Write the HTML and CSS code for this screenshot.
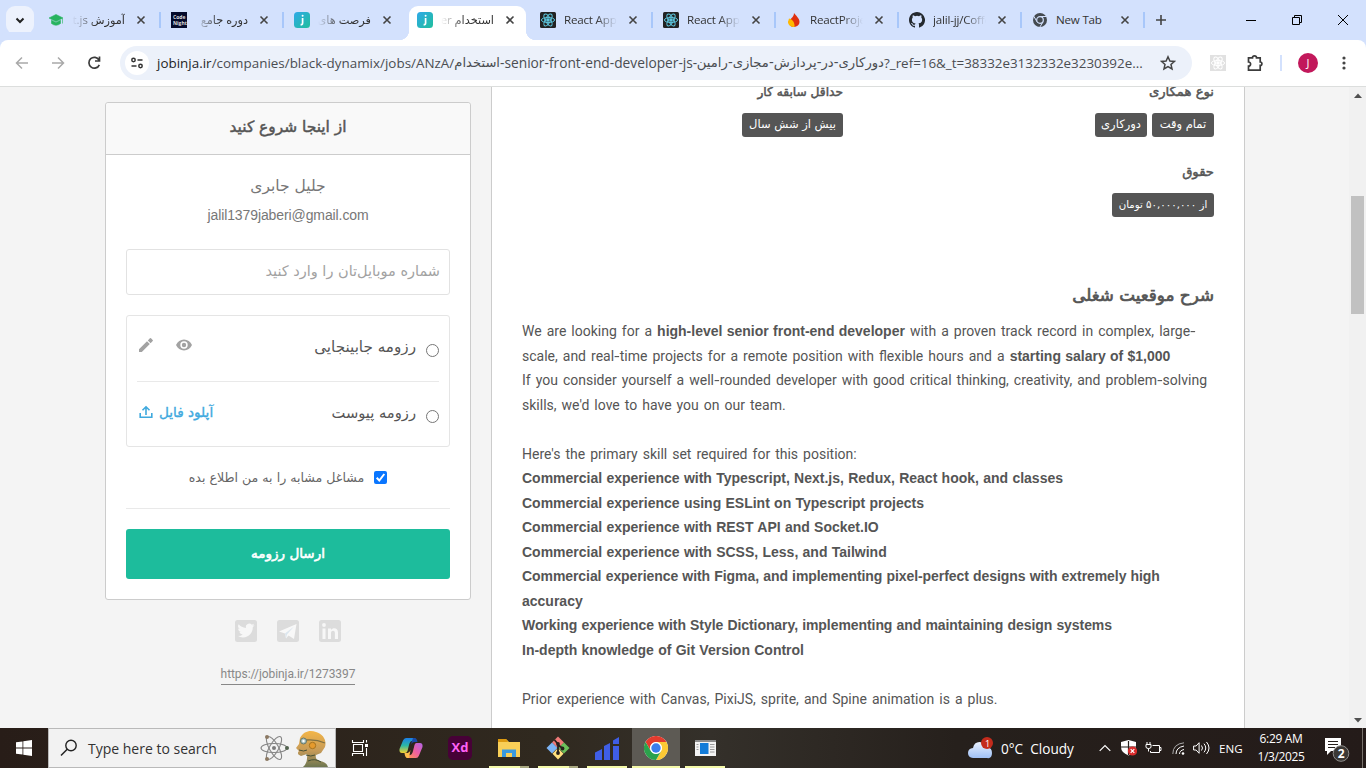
FILE: index.html
```html
<!DOCTYPE html>
<html lang="fa">
<head>
<meta charset="utf-8">
<title>jobinja.ir</title>
<link rel="stylesheet" href="styles.css">
</head>
<body>
<svg class="defs" width="0" height="0">
  <defs>
    <linearGradient id="teal" x1="0" y1="0" x2="1" y2="1"><stop offset="0" stop-color="#2fa9e8"/><stop offset="1" stop-color="#1fbf9c"/></linearGradient>
    <linearGradient id="cop" x1="0" y1="0" x2="0" y2="1"><stop offset="0" stop-color="#1b7fe8"/><stop offset=".5" stop-color="#2cb7a5"/><stop offset="1" stop-color="#f3d12f"/></linearGradient>
    <linearGradient id="cop2" x1="1" y1="0" x2="0" y2="1"><stop offset="0" stop-color="#b264e8"/><stop offset=".5" stop-color="#ee5fa0"/><stop offset="1" stop-color="#ff9a4a"/></linearGradient>
    <linearGradient id="cloud" x1="0" y1="0" x2="0" y2="1"><stop offset="0" stop-color="#e9f1ff"/><stop offset="1" stop-color="#9fc0f5"/></linearGradient>
    <linearGradient id="gold" x1="0" y1="0" x2="0" y2="1"><stop offset="0" stop-color="#f3b548"/><stop offset=".55" stop-color="#c59a58"/><stop offset="1" stop-color="#6d7650"/></linearGradient>
    <g id="x"><path d="M-3.5-3.5 3.5 3.5M3.5-3.5-3.5 3.5" stroke="#444" stroke-width="1.6" fill="none"/></g>
    <g id="atom"><g fill="none" stroke-width="1"><ellipse rx="6.6" ry="2.6"/><ellipse rx="6.6" ry="2.6" transform="rotate(60)"/><ellipse rx="6.6" ry="2.6" transform="rotate(120)"/></g><circle r="1.3"/></g>
    <g id="jfav"><rect width="16" height="16" rx="3.5" fill="url(#teal)"/><path d="M8.6 6v5q0 1.8-2 1.6" stroke="#fff" stroke-width="1.7" fill="none"/><circle cx="8.6" cy="3.7" r="1" fill="#fff"/></g>
    <g id="rfav"><rect width="16" height="16" rx="1.5" fill="#222"/><use href="#atom" transform="translate(8 8)" stroke="#5cc4dc" fill="#5cc4dc"/></g>
  </defs>
</svg>

<header class="tabstrip">
  <div class="tabsearch"><svg width="28" height="28"><path d="M10.5 12.5 14 16l3.500-3.500" stroke="#222" stroke-width="2" fill="none"/></svg></div>
  <div class="tab sep"><svg class="fav" width="16" height="16"><path d="M8 2.500 15 6 8 9.500 1 6zM3.500 8.200v3.300Q8 15 12.500 11.500V8.200L8 10.500zM14.500 6.500v5" fill="#27b35f" stroke="#27b35f" stroke-width=".6"/></svg><span class="title rtl">آموزش Next.js</span><svg class="close" width="10" height="10"><use href="#x" x="5" y="5"/></svg></div>
  <div class="tab sep"><svg class="fav" width="16" height="16"><rect width="16" height="16" fill="#050b2c"/><text x="2" y="7" class="tiny">Code</text><text x="2" y="13" class="tiny">Night</text></svg><span class="title rtl">دوره جامع</span><svg class="close" width="10" height="10"><use href="#x" x="5" y="5"/></svg></div>
  <div class="tab"><svg class="fav" width="16" height="16"><use href="#jfav"/></svg><span class="title rtl">فرصت های شغلی</span><svg class="close" width="10" height="10"><use href="#x" x="5" y="5"/></svg></div>
  <div class="tab active"><svg class="fav" width="16" height="16"><use href="#jfav"/></svg><span class="title rtl">استخدام developer</span><svg class="close" width="10" height="10"><use href="#x" x="5" y="5"/></svg></div>
  <div class="tab sep"><svg class="fav" width="16" height="16"><use href="#rfav"/></svg><span class="title">React App</span><svg class="close" width="10" height="10"><use href="#x" x="5" y="5"/></svg></div>
  <div class="tab sep"><svg class="fav" width="16" height="16"><use href="#rfav"/></svg><span class="title">React App</span><svg class="close" width="10" height="10"><use href="#x" x="5" y="5"/></svg></div>
  <div class="tab sep"><svg class="fav" width="16" height="16"><path d="M8 1C10 4 13.500 6 13.500 10A5.500 5 0 0 1 8 15C5 15 3 13 2.500 10 3 7 8 6 8 1" fill="#e0300f"/><path d="M3 6.500C5 7 9 9 8.500 15 5 15 2 13 2 10z" fill="#ffb900"/></svg><span class="title">ReactProject</span><svg class="close" width="10" height="10"><use href="#x" x="5" y="5"/></svg></div>
  <div class="tab sep"><svg class="fav" width="16" height="16" viewBox="0 0 16 16"><path fill="#24292f" d="M8 0C3.580 0 0 3.580 0 8c0 3.540 2.290 6.530 5.470 7.590.4.070.55-.17.55-.38 0-.19-.01-.82-.01-1.490-2.010.37-2.530-.49-2.690-.94-.09-.23-.48-.94-.82-1.130-.28-.15-.68-.52-.01-.53.63-.01 1.080.58 1.230.82.72 1.210 1.870.87 2.330.66.070-.52.28-.87.51-1.070-1.780-.2-3.640-.89-3.640-3.950 0-.87.31-1.590.82-2.150-.08-.2-.36-1.020.080-2.120 0 0 .67-.21 2.200.82a7.600 7.600 0 0 1 4 0c1.530-1.040 2.200-.82 2.200-.82.44 1.100.16 1.920.08 2.120.51.56.82 1.270.82 2.150 0 3.070-1.870 3.750-3.650 3.950.29.25.54.73.54 1.480 0 1.070-.01 1.930-.01 2.200 0 .21.15.46.55.38A8 8 0 0 0 8 0"/></svg><span class="title">jalil-jj/Coffee</span><svg class="close" width="10" height="10"><use href="#x" x="5" y="5"/></svg></div>
  <div class="tab sep"><svg class="fav" width="16" height="16"><circle cx="8" cy="8" r="7" fill="#444a50"/><path d="M8 4.500H14.500M5 9.800 1.800 4.200M11 9.800 7.800 15.200" stroke="#d3e1fd" stroke-width="1"/><circle cx="8" cy="8" r="3.300" fill="#444a50" stroke="#d3e1fd" stroke-width="1.200"/></svg><span class="title nt">New Tab</span><svg class="close" width="10" height="10"><use href="#x" x="5" y="5"/></svg></div>
  <svg class="plus" width="12" height="12"><path d="M6 1v10M1 6h10" stroke="#444" stroke-width="1.600"/></svg>
  <div class="winctl">
    <svg width="46" height="40"><path d="M18 20.500h10" stroke="#000"/></svg>
    <svg width="46" height="40"><path d="M18.500 17.500h7v7h-7zM20.500 17.500v-2h7v7h-2" fill="none" stroke="#000"/></svg>
    <svg width="46" height="40"><path d="m18 15 10 10M28 15 18 25" stroke="#000"/></svg>
  </div>
</header>

<nav class="toolbar">
  <svg class="nb" width="36" height="46"><path d="M16.500 23h11.500M22 17.500 16.500 23l5.500 5.500" fill="none" stroke="#a9a9a9" stroke-width="1.500"/></svg>
  <svg class="nb" width="36" height="46"><path d="M16 23h11.500M22 17.500l5.500 5.500-5.500 5.500" fill="none" stroke="#a9a9a9" stroke-width="1.500"/></svg>
  <svg class="nb" width="36" height="46"><path d="M27 20a5.400 5.400 0 1 0 .3 4.800M27.500 16.500v4.500h-4.500" fill="none" stroke="#3c3c3c" stroke-width="1.700"/></svg>
  <div class="omni">
    <svg class="site" width="24" height="24"><circle cx="12" cy="12" r="12" fill="#fff"/><g fill="none" stroke="#333" stroke-width="1.500"><circle cx="8.500" cy="9" r="1.700"/><path d="M12.500 9h5M6.500 15h5"/><circle cx="15.500" cy="15" r="1.700"/></g></svg>
    <div class="url"><span class="u1"><b>jobinja.ir</b>/companies/black-dynamix/jobs/ANzA/</span><span class="u2 fa">استخدام</span><span class="u3">-senior-front-end-developer-js-</span><span class="u4 fa">دورکاری-در-پردازش-مجازی-رامین</span><span class="u5">?_ref=16&amp;_t=38332e3132332e3230392e...</span></div>
    <svg class="star" width="16" height="16"><path d="m8 1.800 1.900 4.200 4.500.4-3.400 3 1 4.500L8 11.500 4 13.900l1-4.500-3.400-3 4.500-.4z" fill="none" stroke="#444" stroke-width="1.500"/></svg>
  </div>
  <svg class="ext" width="16" height="16"><rect width="16" height="16" fill="#e1e1e1"/><use href="#atom" transform="translate(8 8)" stroke="#fff" fill="#fff"/></svg>
  <svg class="puz" width="18" height="18"><path d="M2.500 3.800h4a1.500 1.500 0 0 1 4 0h3.700v4.200a1.600 1.600 0 0 1 0 3.400v4.800H2.500v-4a2 2 0 0 0 0-4.200z" fill="none" stroke="#3c3c3c" stroke-width="1.700"/></svg>
  <i class="vsep"></i>
  <span class="avatar">J</span>
  <svg class="dots" width="6" height="20"><g fill="#444"><circle cx="3" cy="5" r="1.600"/><circle cx="3" cy="10" r="1.600"/><circle cx="3" cy="15" r="1.600"/></g></svg>
</nav>

<main class="page">
  <aside class="side">
    <section class="card">
      <h2 class="cardhead fa">از اینجا شروع کنید</h2>
      <div class="cardbody">
        <p class="name fa">جلیل جابری</p>
        <p class="mail">jalil1379jaberi@gmail.com</p>
        <div class="input fa">شماره موبایل‌تان را وارد کنید</div>
        <div class="choices">
          <div class="choice">
            <i class="radio"></i><span class="ctext fa">رزومه جابینجایی</span>
            <span class="acts"><svg width="16" height="12"><path d="M8 .5C4.500.5 1.500 2.600 0 6c1.500 3.400 4.500 5.500 8 5.500s6.500-2.100 8-5.500C14.500 2.600 11.500.5 8 .5" fill="#a2a2a2"/><circle cx="8" cy="6" r="3.700" fill="#fff"/><circle cx="8" cy="6" r="2.200" fill="#a2a2a2"/></svg><svg width="14" height="14"><path d="M0 11.200V14h2.800L10.800 6 8 3.200zM8.800 2.400l2.800 2.800L13.700 3.100a.8.800 0 0 0 0-1.100L12 .3a.8.800 0 0 0-1.100 0z" fill="#a2a2a2"/></svg></span>
          </div>
          <div class="choice second">
            <i class="radio"></i><span class="ctext att fa">رزومه پیوست</span>
            <span class="upload"><span class="fa">آپلود فایل</span><svg width="14" height="14"><path d="M1.200 8v4.300h11.600V8M7 10V2M3.500 5.300 7 1.800l3.500 3.500" fill="none" stroke="#3fa9de" stroke-width="1.600"/></svg></span>
          </div>
        </div>
        <div class="notify"><svg width="13" height="13"><rect width="13" height="13" rx="2" fill="#0a76ff"/><path d="m2.700 6.800 2.600 2.700 5-6.500" fill="none" stroke="#fff" stroke-width="2"/></svg><span class="fa">مشاغل مشابه را به من اطلاع بده</span></div>
        <div class="send fa">ارسال رزومه</div>
      </div>
    </section>
    <div class="social">
      <svg width="22" height="22"><rect width="22" height="22" rx="2.500" fill="#dcdcdc"/><path transform="translate(2.500 2) scale(.71)" fill="#f7f7f7" d="M23.950 4.570a10 10 0 0 1-2.820.77 4.960 4.960 0 0 0 2.160-2.720c-.95.55-2 .96-3.130 1.180a4.920 4.920 0 0 0-8.380 4.480C7.690 8.100 4.070 6.130 1.640 3.160a4.920 4.920 0 0 0 1.520 6.570 4.900 4.900 0 0 1-2.230-.61v.06a4.920 4.920 0 0 0 3.950 4.830 5 5 0 0 1-2.210.08 4.940 4.940 0 0 0 4.600 3.420A9.870 9.870 0 0 1 0 19.540a14 14 0 0 0 7.550 2.210c9.050 0 14-7.500 14-13.980 0-.21 0-.42-.02-.63a9.940 9.940 0 0 0 2.460-2.550z"/></svg>
      <svg width="22" height="22"><rect width="22" height="22" rx="2.500" fill="#dcdcdc"/><path d="M2 11.500 19.500 4 17 19l-5.500-3.500L9 18.500l-1-5z" fill="#f8f8f8"/><path d="m8 13.500 9-7-7 8-1 4z" fill="#dce6ee"/></svg>
      <svg width="22" height="22"><rect width="22" height="22" rx="2.500" fill="#dcdcdc"/><path d="M3.500 8.500h3V19h-3zM9 8.500h3v1.600c2-3 7-2.300 7 2.400V19h-3.100v-6c0-3.300-3.900-3-3.900 0v6H9z" fill="#f7f7f7"/><circle cx="5" cy="5" r="1.900" fill="#f7f7f7"/></svg>
    </div>
    <span class="short">https://jobinja.ir/1273397</span>
  </aside>

  <article class="job">
    <div class="facts" dir="rtl">
      <div class="fact"><h4 class="fa">نوع همکاری</h4><div class="tags"><span class="tag t1 fa">تمام وقت</span><span class="tag t2 fa">دورکاری</span></div></div>
      <div class="fact wide"><h4 class="fa">حداقل سابقه کار</h4><div class="tags"><span class="tag t3 fa">بیش از شش سال</span></div></div>
      <div class="fact"><h4 class="fa">حقوق</h4><div class="tags"><span class="tag t4 fa">از ۵۰,۰۰۰,۰۰۰ تومان</span></div></div>
    </div>
    <h3 class="jobtitle fa" dir="rtl">شرح موقعیت شغلی</h3>
    <div class="desc">We are looking for a <b>high-level senior front-end developer</b> with a proven track record in complex, large<span class="hy">-</span><br>scale, and real<span class="hy">-</span>time projects for a remote position with flexible hours and a <b>starting salary of $1,000</b><br>If you consider yourself a well<span class="hy">-</span>rounded developer with good critical thinking, creativity, and problem<span class="hy">-</span>solving<br>skills, we'd love to have you on our team.<br><br>Here's the primary skill set required for this position:<br><b>Commercial experience with Typescript, Next.js, Redux, React hook, and classes<br>Commercial experience using ESLint on Typescript projects<br>Commercial experience with REST API and Socket.IO<br>Commercial experience with SCSS, Less, and Tailwind<br><span class="snug">Commercial experience with Figma, and implementing pixel-perfect designs with extremely high</span><br>accuracy<br><span class="snug">Working experience with Style Dictionary, implementing and maintaining design systems</span><br>In-depth knowledge of Git Version Control</b><br><br>Prior experience with Canvas, PixiJS, sprite, and Spine animation is a plus.</div>
  </article>

  <div class="scroll">
    <svg width="17" height="17"><path d="M5 11h8L9 6.500z" fill="#505050"/></svg>
    <i class="thumb"></i>
    <svg width="17" height="17"><path d="M5 7h8l-4 4.500z" fill="#505050"/></svg>
  </div>
</main>

<footer class="taskbar">
  <div class="slot"><svg width="16" height="16"><path d="M0 2.300 6.500 1.400v6.200H0zM7.300 1.300 16 0v7.600H7.300zM0 8.400h6.500v6.200L0 13.700zM7.300 8.400H16V16l-8.700-1.300z" fill="#fff"/></svg></div>
  <div class="search">
    <svg width="18" height="18"><circle cx="11" cy="6.500" r="5.200" fill="none" stroke="#222" stroke-width="1.400"/><path d="M7.200 10.300 1 16.500" stroke="#222" stroke-width="1.500"/></svg>
    <span>Type here to search</span>
    <svg class="art" width="74" height="38">
      <g transform="translate(14 19)" fill="none" stroke="#858585" stroke-width="1.100"><ellipse rx="13" ry="4.500"/><ellipse rx="13" ry="4.500" transform="rotate(60)"/><ellipse rx="13" ry="4.500" transform="rotate(120)"/><circle r="1.500" fill="#777"/></g>
      <circle cx="7" cy="8" r="2" fill="#8c7963"/><circle cx="27" cy="19" r="2" fill="#52634f"/><circle cx="7" cy="30" r="2" fill="#8c7963"/>
      <path d="M40 9C44 2 50 1 56 3c7 2 11 8 9 15l-4 6-5 2c-1 4 1 5 4 6 5 1 7 3 8 6H43q5-4 4-13l-6 2c-3-1-4-3-2-5l-3-3 3-4z" fill="url(#gold)"/>
      <path d="M46 11q10-1 19 3" stroke="#7f7043" fill="none" stroke-width="1.300"/><circle cx="43.500" cy="12" r="3" fill="#a8c2c2" stroke="#667566"/><circle cx="43.500" cy="12" r="1.200" fill="#fff"/><circle cx="52.500" cy="16.500" r="3.200" fill="#e59a2d" stroke="#a7741f"/><path d="M39 21q5 2 8 0M46 26q5 2 9 0M48 32q7-3 13 1" stroke="#434f35" fill="none"/>
    </svg>
  </div>
  <div class="slot"><svg width="18" height="16"><path d="M2.500 4.500h9v7h-9zM1.500 0v2.500h11V0M1.500 16v-2.500h11V16M15.500 0v2.500M15.500 8v8" fill="none" stroke="#fff" stroke-width="1.100"/><path d="M14 4h3v3h-3z" fill="#fff"/></svg></div>
  <div class="apps">
    <div class="app"><svg width="24" height="22"><path d="M7 1h8q2 0 1.500 2L13 4q-2 0-3 4l-1.500 6q-.6 2-2.500 2H3q-3 0-2.500-4L4 3.500Q5 1 7 1" fill="url(#cop)"/><path d="M17.500 6H21q3 0 2.500 4L20 18.500Q19 21 17 21H9q-2 0-1.500-2l3.500-1q2 0 3-4l1.500-6q.5-2 2-2" fill="url(#cop2)"/><path d="M14 1h2q2 .5 2.500 4h-3q-3 0-4 4l1.500-5z" fill="#1949a8"/><path d="M10 21H8q-2-.5-2.500-5h3q2 0 3-3z" fill="#ffbd4c"/></svg></div>
    <div class="app"><span class="xd">Xd</span></div>
    <div class="app run split"><svg width="22" height="18"><path d="M0 1h9l2 2h11v15H0z" fill="#f9cf57"/><path d="M0 0h8.500l1.500 3H0z" fill="#dd9a10"/><path d="M4 18v-7.500h14V18h-4v-4H8v4z" fill="#3a9ade"/></svg></div>
    <div class="app run split"><svg width="24" height="24"><path d="m12 .5 6 6-6 6-6-6z" fill="#f07a78"/><path d="m6 6.500 5.500 5.500L6 17.500.5 12z" fill="#7db4f5"/><path d="m18 6.500 5.500 5.500-5.500 5.500-5.500-5.500z" fill="#6cc05b"/><path d="m12 12 5.500 5.700L12 23.500l-5.500-5.800z" fill="#ffe07e"/><path d="M8.500 4 12 8v9M12 9l5 3.500" fill="none" stroke="#26201c" stroke-width="1.800"/><circle cx="12" cy="8" r="1.900" fill="#26201c"/><circle cx="16.500" cy="12.500" r="1.900" fill="#26201c"/><circle cx="12" cy="17" r="1.900" fill="#26201c"/></svg></div>
    <div class="app run"><svg width="25" height="23"><path d="M0 15.500 7 12v11H0zM9 9 15 6v17H9zM18 3.500 24 0v7h-6zM18 9h6v14h-6z" fill="#3f5ee6"/></svg></div>
    <div class="app run on"><svg width="24" height="24" viewBox="0 0 24 24"><circle cx="12" cy="12" r="12" fill="#fff"/><path d="M1.600 6A12 12 0 0 1 22.400 6H12a6 6 0 0 0-5.200 9z" fill="#e33b2e"/><path d="M22.400 6A12 12 0 0 1 12 24l5.200-9A6 6 0 0 0 12 6z" fill="#fcc934"/><path d="M12 24A12 12 0 0 1 1.600 6l5.200 9a6 6 0 0 0 10.400 0z" fill="#2ba24c"/><circle cx="12" cy="12" r="5.800" fill="#fff"/><circle cx="12" cy="12" r="4.700" fill="#3b7ded"/></svg></div>
    <div class="app run"><svg width="21" height="16"><rect width="21" height="16" fill="#f3f3f3"/><path d="M0 0h21v2H0z" fill="#8c8c8c"/><path d="M5 3h8.500v11H5z" fill="#127bd8"/><path d="M1.500 4.500h2M1.500 7h2M1.500 9.500h2M15 4.500h4.500M15 7h4.500M15 9.500h4.500M15 12h4.500" stroke="#9a9a9a"/></svg></div>
  </div>
  <div class="tray">
    <svg class="cloud" width="26" height="22"><path d="M5 21q-5-.5-5-5t5-5q1-6 6.500-6T18 11q6-1 6 5t-5 5z" fill="url(#cloud)"/><circle cx="19" cy="6" r="6" fill="#c42b1c"/><text x="17" y="9.500" class="badge">1</text></svg>
    <span class="weather">0°C&nbsp; Cloudy</span>
    <svg class="chev" width="12" height="8"><path d="m.7 6.800 5.300-5.300 5.300 5.300" fill="none" stroke="#fff" stroke-width="1.200"/></svg>
    <svg class="shield" width="16" height="16"><path d="M7.500 0 15 2v5q0 5.500-7.500 8.500Q0 12.500 0 7V2z" fill="#fff"/><path d="M7.500 1v14M0 7h15" stroke="#26201c" stroke-width="1.200"/><circle cx="11.500" cy="11" r="4.600" fill="#d92c2c"/><path d="m9.700 9.200 3.600 3.600M13.300 9.200 9.700 12.800" stroke="#fff" stroke-width="1.200"/></svg>
    <svg class="bat" width="17" height="14"><path d="M7.500 4.500h7v7H5.500v-1.500M14.500 6.500h1.500v3h-1.500M1 3.500h5v2.500q0 1.500-2.500 1.500T1 6zM2 1v2.500M5 1v2.500M3.500 7.500v3" fill="none" stroke="#fff"/></svg>
    <svg class="wifi" width="13" height="13"><g fill="none" stroke="#fff"><path d="M7.500 12q0-3.500 4.500-4.500M4 12q0-6.500 8-8" /><path d="M.8 12Q.8 2 12 .8" stroke="#aaa"/></g><circle cx="11" cy="11.500" r="1.300" fill="#fff"/></svg>
    <svg class="vol" width="17" height="14"><path d="M.6 5h2.500l3-3.300v10.600L3.100 9H.6zM8.500 4.500q2 2.500 0 5M11 2.700q3.500 4.300 0 8.600M13.500 1q5 6 0 12" fill="none" stroke="#fff"/></svg>
    <span class="eng">ENG</span>
    <div class="clock"><span>6:29 AM</span><span>1/3/2025</span></div>
    <svg class="note" width="26" height="25"><path d="M1 0h16v13H7l-4 4v-4H1z" fill="#fff"/><path d="M4 3.500h10M4 6.500h10M4 9.500h7" stroke="#26201c" stroke-width="1.200"/><circle cx="17" cy="15.500" r="7.800" fill="#3b3835" stroke="#8f8d8b"/><text x="13.700" y="20" class="two">2</text></svg>
    <i class="edge"></i>
  </div>
</footer>
</body>
</html>
```
FILE: styles.css
```css
* { box-sizing: border-box; }
body { margin: 0; width: 1366px; height: 768px; overflow: hidden; display: flex; flex-direction: column; font-family: "Open Sans", "DejaVu Sans", sans-serif; background: #f4f4f4; color: #555; }
svg { display: block; flex: none; }
i { display: block; }
.defs { position: absolute; }
.fa { font-family: "DejaVu Sans", sans-serif; direction: rtl; white-space: nowrap; }

.tabstrip { height: 40px; flex: none; display: flex; align-items: center; background: #d3e1fd; padding-left: 6px; }
.tabsearch { width: 28px; height: 28px; border-radius: 9px; background: #edf2fd; margin-right: 3px; }
.tab { width: 123px; height: 28px; flex: none; display: flex; align-items: center; padding-left: 11px; position: relative; }
.tab .title { width: 53px; height: 20px; margin-left: 8px; margin-right: 1px; line-height: 20px; font-size: 11.6px; letter-spacing: -.2px; color: #333; overflow: hidden; white-space: nowrap; -webkit-mask-image: linear-gradient(90deg, #000 60%, transparent); mask-image: linear-gradient(90deg, #000 60%, transparent); }
.tab .title.rtl { direction: rtl; font-family: "Open Sans", "DejaVu Sans", sans-serif; letter-spacing: 0; font-size: 11.3px; -webkit-mask-image: linear-gradient(270deg, #000 55%, transparent); mask-image: linear-gradient(270deg, #000 55%, transparent); }
.tab .title.nt { -webkit-mask-image: none; mask-image: none; }
.tab .close { margin-left: 10px; }
.tab.sep::after { content: ""; position: absolute; right: -1px; top: 6px; width: 2px; height: 16px; background: #a8c7fa; }
.tab.active { height: 34px; align-self: flex-end; padding-bottom: 6px; }
.tab.active > * { position: relative; z-index: 1; }
.tab.active::before { content: ""; position: absolute; left: 3px; right: 3px; top: 0; bottom: 0; background: #fff; border-radius: 9px 9px 0 0; }
.tab.active::after { content: ""; position: absolute; left: -7px; right: -7px; bottom: 0; height: 10px; background: radial-gradient(circle at 0 0, transparent 10px, #fff 10.5px) left / 10px 10px no-repeat, radial-gradient(circle at 100% 0, transparent 10px, #fff 10.5px) right / 10px 10px no-repeat; }
.tiny { font: bold 5px "Open Sans", sans-serif; fill: #ddd; }
.plus { margin-left: 11px; }
.winctl { margin-left: auto; display: flex; }

.toolbar { height: 47px; flex: none; display: flex; align-items: center; background: #fff; border-bottom: 1px solid #dcdedd; border-radius: 8px 8px 0 0; box-shadow: 0 -8px 0 #d3e1fd; }
.omni { margin-left: 12px; width: 1072px; height: 34px; border-radius: 17px; background: #ecf1fa; display: flex; align-items: center; padding-left: 5px; }
.url { width: 986px; margin-left: 8px; display: flex; align-items: center; font-size: 13.4px; line-height: 20px; color: #4a4d51; white-space: nowrap; }
.url b { font-weight: 400; color: #1f1f1f; }
.url span { flex: none; }
.u1 { width: 297px; letter-spacing: .02px; }
.u2 { width: 46px; font-size: 13.1px; }
.u3 { width: 197px; font-size: 13.75px; }
.u4 { width: 187px; font-size: 13.2px; }
.u5 { width: 259px; }
.star { margin-left: 17px; }
.ext { margin-left: 18px; }
.puz { margin-left: 20px; }
.vsep { width: 2px; height: 16px; background: #d3e1fd; margin-left: 16px; }
.avatar { width: 20px; height: 20px; border-radius: 50%; background: #c2185b; color: #fff; font-size: 11px; line-height: 20px; text-align: center; margin-left: 16px; }
.dots { margin-left: 23px; }

.page { height: 641px; flex: none; display: flex; align-items: stretch; overflow: hidden; }
.side { width: 366px; margin-left: 105px; padding-top: 15px; display: flex; flex-direction: column; align-items: center; }
.card { width: 366px; height: 498px; background: #fff; border: 1px solid #ccc; border-radius: 3px; flex: none; }
.cardhead { margin: 0; height: 52px; border-bottom: 1px solid #ccc; background: #f9f9f9; font-weight: 400; -webkit-text-stroke: .5px #555; font-size: 15.4px; line-height: 49px; text-align: center; border-radius: 3px 3px 0 0; }
.cardbody { padding: 20px; display: flex; flex-direction: column; }
.name { margin: 0; height: 24px; line-height: 23px; font-size: 15.5px; text-align: center; color: #777; }
.mail { margin: 4px 0 22px; height: 24px; line-height: 24px; text-align: center; font-family: "Liberation Sans", sans-serif; font-size: 14px; letter-spacing: -.1px; color: #777; }
.input { height: 46px; border: 1px solid #e2e2e2; border-radius: 3px; padding: 0 9px; line-height: 43px; font-size: 14.5px; color: #a2a2a2; }
.choices { margin-top: 20px; height: 132px; border: 1px solid #e5e5e5; border-radius: 3px; padding: 0 10px; }
.choice { direction: rtl; height: 66px; display: flex; align-items: center; border-bottom: 1px solid #e9e9e9; }
.choice.second { border: 0; height: 64px; }
.radio { width: 13px; height: 13px; border: 1px solid #767676; border-radius: 50%; margin-top: 4px; flex: none; }
.ctext { margin: -3px 10px 0 0; font-size: 15.2px; line-height: 24px; }
.ctext.att { font-size: 14.7px; }
.acts, .upload { margin-right: auto; display: flex; align-items: center; }
.acts { gap: 23px; margin-left: 2px; margin-top: -8px; }
.upload { gap: 6px; margin-left: 2px; font-size: 13.6px; color: #3fa9de; margin-top: -4px; -webkit-text-stroke: .35px #3fa9de; }
.upload svg { -webkit-text-stroke: 0; }
.notify { direction: rtl; height: 62px; border-bottom: 1px solid #e9e9e9; display: flex; justify-content: center; align-items: center; gap: 10px; font-size: 12.6px; color: #666; }
.send { margin-top: 20px; height: 50px; border-radius: 3px; background: #1dbc9c; color: #fff; -webkit-text-stroke: .6px #fff; font-size: 13.5px; line-height: 48px; text-align: center; }
.social { margin-top: 20px; display: flex; gap: 20px; }
.short { margin-top: 22px; height: 21px; line-height: 20px; border-bottom: 1px solid #888; font-family: Roboto, sans-serif; font-size: 12px; letter-spacing: -.07px; color: #888; }

.job { width: 754px; margin-left: 20px; background: #fff; border: solid #ccc; border-width: 0 1px; padding: 0 30px; overflow: hidden; }
.facts { height: 193px; display: grid; grid-template-columns: 371px 321px; grid-auto-rows: 80px; overflow: visible; }
.fact h4 { margin: 0; height: 26px; line-height: 10px; font-weight: 400; -webkit-text-stroke: .5px #555; font-size: 13.2px; }
.fact.wide h4 { font-size: 12.2px; }
.tags { display: flex; gap: 5px; }
.tag { height: 24px; border-radius: 3px; background: #555; color: #fff; font-size: 11.5px; line-height: 23px; text-align: center; }
.t1 { width: 62px; } .t2 { width: 52px; } .t3 { width: 101px; } .t4 { width: 102px; font-size: 10.2px; }
.jobtitle { margin: 0; height: 39px; line-height: 30px; font-weight: 400; -webkit-text-stroke: .7px #555; font-size: 16.8px; }
.desc { font-family: Roboto, sans-serif; font-size: 14px; line-height: 24.5px; word-spacing: 1.55px; color: #555; white-space: nowrap; }
.desc b { font-family: "Liberation Sans", sans-serif; word-spacing: .4px; }
.snug { letter-spacing: -.07px; }
.hy { display: inline-block; margin: 0 .9px; transform: scaleX(1.35); }
.scroll { margin-left: auto; width: 17px; background: #f1f1f1; display: flex; flex-direction: column; }
.thumb { width: 13px; height: 118px; margin: 92px 0 auto 2px; background: #c1c1c1; }

.taskbar { height: 40px; flex: none; display: flex; align-items: stretch; background: linear-gradient(90deg, #281d18, #30291f 40%, #34302a 52%, #26201c 70%, #241b19); color: #fff; }
.slot { width: 48px; display: flex; align-items: center; justify-content: center; }
.search { width: 288px; border: 1px solid #b9b9b9; background: #f2f2f2; display: flex; align-items: center; padding-left: 11px; color: #333; }
.search span { margin-left: 10px; font-size: 14px; width: 128px; white-space: nowrap; }
.search .art { margin-left: 44px; }
.apps { display: flex; gap: 1px; margin-left: 3px; }
.app { width: 48px; display: flex; align-items: center; justify-content: center; position: relative; }
.app.on { background: #5d5a54; }
.run::after { content: ""; position: absolute; left: 4px; right: 4px; bottom: 0; height: 2px; background: #f4f9a9; }
.run.split::after { background: linear-gradient(90deg, #f4f9a9 31px, #a9a981 31px); }
.run.on::after { left: 0; right: 0; }
.xd { width: 24px; height: 24px; border-radius: 5px; background: #470137; color: #ff61f6; font: bold 13px/23px "Open Sans", sans-serif; text-align: center; }
.tray { margin-left: auto; display: flex; align-items: center; font-size: 12px; white-space: nowrap; }
.weather { width: 75px; margin-left: 7px; font-size: 13.6px; }
.chev { margin-left: 23px; }
.shield { margin-left: 10px; }
.bat { margin-left: 8px; }
.wifi { margin-left: 10px; }
.vol { margin-left: 8px; }
.eng { margin-left: 9px; width: 26px; font-size: 11.6px; }
.clock { width: 60px; margin-left: 6px; display: flex; flex-direction: column; align-items: center; line-height: 18px; letter-spacing: -.35px; }
.note { margin-left: 13px; margin-top: 4px; }
.edge { width: 1px; height: 40px; background: #77716b; margin: 0 3px 0 12px; }
.badge { font: 9px "Open Sans", sans-serif; fill: #fff; }
.two { font: bold 12px "Open Sans", sans-serif; fill: #fff; }
```
